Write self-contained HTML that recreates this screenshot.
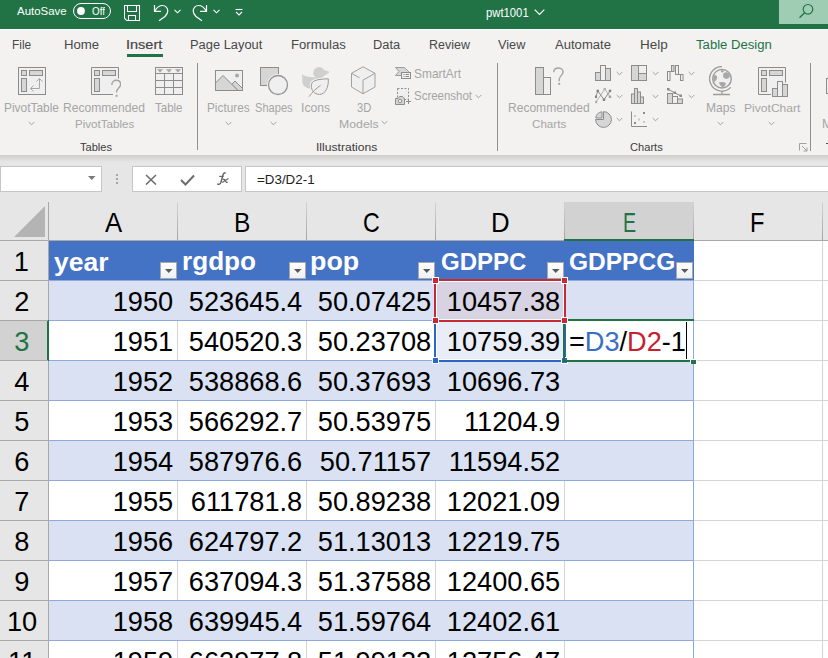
<!DOCTYPE html>
<html><head><meta charset="utf-8"><style>
html,body{margin:0;padding:0;}
body{width:828px;height:658px;overflow:hidden;position:relative;background:#fff;font-family:"Liberation Sans", sans-serif;}
div,svg{box-sizing:border-box;}
</style></head><body>
<div style="position:absolute;left:0px;top:0px;width:828px;height:29px;background:#217346;"></div><div style="position:absolute;left:16.60px;top:4px;font-size:11.83px;line-height:14px;height:14px;color:#fff;font-weight:normal;white-space:nowrap;transform:scaleX(0.9674);transform-origin:left 0;">AutoSave</div><div style="position:absolute;left:73px;top:3px;width:36px;height:14px;border:1px solid #fff;border-radius:8px;box-sizing:content-box"></div><svg style="position:absolute;left:76px;top:6px;" width="10" height="10" viewBox="0 0 10 10"><circle cx="5" cy="5" r="3.9" fill="#fff"/></svg><div style="position:absolute;left:91.81px;top:5px;font-size:10.60px;line-height:12px;height:12px;color:#fff;font-weight:normal;white-space:nowrap;transform:scaleX(0.9285);transform-origin:left 0;">Off</div><svg style="position:absolute;left:124px;top:5px;" width="17" height="17" viewBox="0 0 17 17"><path d="M0.5 0.5H15.5V15.5H2.8L0.5 13.2Z" fill="none" stroke="#fff" stroke-width="1.05"/><path d="M3.5 0.5V6.5H12.5V0.5" fill="none" stroke="#fff" stroke-width="1.05"/><path d="M4.5 15.5V10.5H11.5V15.5" fill="none" stroke="#fff" stroke-width="1.05"/></svg><svg style="position:absolute;left:153px;top:4px;" width="17" height="18" viewBox="0 0 17 18"><path d="M1.5 1V7.3H8" fill="none" stroke="#fff" stroke-width="1.2"/><path d="M1.8 7C3.5 4 6 1.5 9.5 1.5C12.5 1.5 14.8 4 14.8 7C14.8 9.5 13.5 11 12 12.5L6 16.8" fill="none" stroke="#fff" stroke-width="1.2"/></svg><svg style="position:absolute;left:174px;top:9px;" width="7" height="5" viewBox="0 0 7 5"><path d="M0.5 0.8L3.5 3.8L6.5 0.8" fill="none" stroke="#fff" stroke-width="1.1"/></svg><svg style="position:absolute;left:192px;top:4px;" width="17" height="18" viewBox="0 0 17 18"><g transform="translate(16,0) scale(-1,1)"><path d="M1.5 1V7.3H8" fill="none" stroke="#fff" stroke-width="1.2"/><path d="M1.8 7C3.5 4 6 1.5 9.5 1.5C12.5 1.5 14.8 4 14.8 7C14.8 9.5 13.5 11 12 12.5L6 16.8" fill="none" stroke="#fff" stroke-width="1.2"/></g></svg><svg style="position:absolute;left:213px;top:9px;" width="7" height="5" viewBox="0 0 7 5"><path d="M0.5 0.8L3.5 3.8L6.5 0.8" fill="none" stroke="#fff" stroke-width="1.1"/></svg><svg style="position:absolute;left:235px;top:8px;" width="8" height="8" viewBox="0 0 8 8"><path d="M0.5 1.5H7.5" stroke="#fff" stroke-width="1.1"/><path d="M1 4L4 7L7 4" fill="none" stroke="#fff" stroke-width="1.1"/></svg><div style="position:absolute;left:486.01px;top:6px;font-size:12.68px;line-height:14px;height:14px;color:#fff;font-weight:normal;white-space:nowrap;transform:scaleX(0.8902);transform-origin:left 0;">pwt1001</div><svg style="position:absolute;left:534px;top:9px;" width="12" height="7" viewBox="0 0 12 7"><path d="M0.7 0.7L5.5 5.5L10.3 0.7" fill="none" stroke="#fff" stroke-width="1.2"/></svg><div style="position:absolute;left:779px;top:0px;width:49px;height:24px;background:#9fcdb3;"></div><svg style="position:absolute;left:796px;top:2px;" width="20" height="20" viewBox="0 0 20 20"><circle cx="12" cy="7.3" r="4.8" fill="none" stroke="#217346" stroke-width="1.2"/><path d="M8.6 10.7L3.5 15.8" stroke="#217346" stroke-width="1.3"/></svg><div style="position:absolute;left:0px;top:29px;width:828px;height:126px;background:#f3f2f1;"></div><div style="position:absolute;left:0px;top:29px;width:828px;height:1px;background:#fbfbfb;"></div><div style="position:absolute;left:11.65px;top:37px;font-size:13.11px;line-height:15px;height:15px;color:#484848;font-weight:normal;white-space:nowrap;transform:scaleX(0.9062);transform-origin:left 0;">File</div><div style="position:absolute;left:63.74px;top:37px;font-size:13.11px;line-height:15px;height:15px;color:#484848;font-weight:normal;white-space:nowrap;transform:scaleX(1.0062);transform-origin:left 0;">Home</div><div style="position:absolute;left:125.90px;top:37px;font-size:13.11px;line-height:15px;height:15px;color:#484848;font-weight:normal;white-space:nowrap;transform:scaleX(1.1062);transform-origin:left 0;-webkit-text-stroke:0.2px #444;">Insert</div><div style="position:absolute;left:189.97px;top:37px;font-size:13.11px;line-height:15px;height:15px;color:#484848;font-weight:normal;white-space:nowrap;transform:scaleX(0.9822);transform-origin:left 0;">Page Layout</div><div style="position:absolute;left:290.55px;top:37px;font-size:13.11px;line-height:15px;height:15px;color:#484848;font-weight:normal;white-space:nowrap;transform:scaleX(1.0040);transform-origin:left 0;">Formulas</div><div style="position:absolute;left:373.17px;top:37px;font-size:13.11px;line-height:15px;height:15px;color:#484848;font-weight:normal;white-space:nowrap;transform:scaleX(0.9809);transform-origin:left 0;">Data</div><div style="position:absolute;left:429.00px;top:37px;font-size:13.11px;line-height:15px;height:15px;color:#484848;font-weight:normal;white-space:nowrap;transform:scaleX(0.9512);transform-origin:left 0;">Review</div><div style="position:absolute;left:497.97px;top:37px;font-size:13.11px;line-height:15px;height:15px;color:#484848;font-weight:normal;white-space:nowrap;transform:scaleX(0.9697);transform-origin:left 0;">View</div><div style="position:absolute;left:555.00px;top:37px;font-size:13.11px;line-height:15px;height:15px;color:#484848;font-weight:normal;white-space:nowrap;transform:scaleX(0.9968);transform-origin:left 0;">Automate</div><div style="position:absolute;left:640.12px;top:37px;font-size:13.11px;line-height:15px;height:15px;color:#484848;font-weight:normal;white-space:nowrap;transform:scaleX(1.0317);transform-origin:left 0;">Help</div><div style="position:absolute;left:696.04px;top:37px;font-size:13.11px;line-height:15px;height:15px;color:#217346;font-weight:normal;white-space:nowrap;">Table Design</div><div style="position:absolute;left:127px;top:54px;width:36px;height:3px;background:#217346;"></div><div style="position:absolute;left:79.98px;top:141px;font-size:10.95px;line-height:12px;height:12px;color:#3c3c3c;font-weight:normal;white-space:nowrap;transform:scaleX(1.0137);transform-origin:left 0;">Tables</div><div style="position:absolute;left:316.41px;top:141px;font-size:10.95px;line-height:12px;height:12px;color:#3c3c3c;font-weight:normal;white-space:nowrap;transform:scaleX(1.1082);transform-origin:left 0;">Illustrations</div><div style="position:absolute;left:629.84px;top:142px;font-size:10.00px;line-height:11px;height:11px;color:#3c3c3c;font-weight:normal;white-space:nowrap;transform:scaleX(1.1119);transform-origin:left 0;">Charts</div><div style="position:absolute;left:197px;top:63px;width:1px;height:87px;background:#8f8f8f;"></div><div style="position:absolute;left:497px;top:63px;width:1px;height:88px;background:#8f8f8f;"></div><div style="position:absolute;left:810px;top:63px;width:1px;height:88px;background:#8f8f8f;"></div><div style="position:absolute;left:4.45px;top:101px;font-size:12.16px;line-height:14px;height:14px;color:#a5a5a5;font-weight:normal;white-space:nowrap;transform:scaleX(0.9797);transform-origin:left 0;">PivotTable</div><svg style="position:absolute;left:27.9px;top:120.7px;" width="7" height="5" viewBox="0 0 7 5"><path d="M0.7 1L3.5 3.8L6.3 1" fill="none" stroke="#a0a0a0" stroke-width="1"/></svg><div style="position:absolute;left:63.33px;top:100px;font-size:12.97px;line-height:15px;height:15px;color:#a5a5a5;font-weight:normal;white-space:nowrap;transform:scaleX(0.9322);transform-origin:left 0;">Recommended</div><div style="position:absolute;left:74.77px;top:118px;font-size:11.49px;line-height:12px;height:12px;color:#a5a5a5;font-weight:normal;white-space:nowrap;transform:scaleX(1.0099);transform-origin:left 0;">PivotTables</div><div style="position:absolute;left:155.17px;top:101px;font-size:12.16px;line-height:14px;height:14px;color:#a5a5a5;font-weight:normal;white-space:nowrap;transform:scaleX(0.9457);transform-origin:left 0;">Table</div><svg style="position:absolute;left:18px;top:67px;" width="30" height="30" viewBox="0 0 30 30"><rect x="0.5" y="0.5" width="27" height="27" fill="#efefef" stroke="#8c8c8c"/><rect x="3.5" y="3.5" width="5" height="5" fill="#d6d6d6" stroke="#8c8c8c"/><rect x="11.5" y="3.5" width="13" height="5" fill="#d6d6d6" stroke="#8c8c8c"/><rect x="3.5" y="11.5" width="5" height="13" fill="#d6d6d6" stroke="#8c8c8c"/><path d="M12.5 21.5H21.5V11.5M18.5 14.5L21.5 11.5L24.5 14.5M15.5 18.5L12.5 21.5L15.5 24.5" fill="none" stroke="#a8a8a8"/></svg><svg style="position:absolute;left:91px;top:67px;" width="30" height="30" viewBox="0 0 30 30"><path d="M27.5 11.5V0.5H0.5V27.5H22" fill="#efefef" stroke="#8c8c8c"/><rect x="3.5" y="3.5" width="5" height="5" fill="#d6d6d6" stroke="#8c8c8c"/><rect x="11.5" y="3.5" width="13" height="5" fill="#d6d6d6" stroke="#8c8c8c"/><rect x="3.5" y="11.5" width="5" height="13" fill="#d6d6d6" stroke="#8c8c8c"/><path d="M20.8 18C20.8 15 23 13.3 25.3 13.3C27.8 13.3 29.6 15 29.6 17.6C29.6 20.5 25.8 21.5 25.6 24.5V25.6" fill="none" stroke="#a4a4a4" stroke-width="1.4"/><rect x="24.6" y="27.8" width="2" height="2" fill="#a4a4a4"/></svg><svg style="position:absolute;left:155px;top:67px;" width="28" height="28" viewBox="0 0 28 28"><rect x="0.5" y="0.5" width="27" height="27" fill="#efefef" stroke="#8c8c8c"/><path d="M0.5 6.5H27.5M0.5 13.5H27.5M0.5 20.5H27.5M9.5 6.5V27.5M18.5 6.5V27.5" stroke="#8c8c8c"/><path d="M2 2.2H8L5 5.4Z M11 2.2H17L14 5.4Z M20 2.2H26L23 5.4Z" fill="#a4a4a4"/></svg><div style="position:absolute;left:207.36px;top:101px;font-size:12.16px;line-height:14px;height:14px;color:#a5a5a5;font-weight:normal;white-space:nowrap;transform:scaleX(0.9702);transform-origin:left 0;">Pictures</div><svg style="position:absolute;left:225.2px;top:120.7px;" width="7" height="5" viewBox="0 0 7 5"><path d="M0.7 1L3.5 3.8L6.3 1" fill="none" stroke="#a0a0a0" stroke-width="1"/></svg><div style="position:absolute;left:254.55px;top:101px;font-size:12.16px;line-height:14px;height:14px;color:#a5a5a5;font-weight:normal;white-space:nowrap;transform:scaleX(0.9116);transform-origin:left 0;">Shapes</div><svg style="position:absolute;left:270.0px;top:120.7px;" width="7" height="5" viewBox="0 0 7 5"><path d="M0.7 1L3.5 3.8L6.3 1" fill="none" stroke="#a0a0a0" stroke-width="1"/></svg><div style="position:absolute;left:301.40px;top:101px;font-size:12.14px;line-height:14px;height:14px;color:#a5a5a5;font-weight:normal;white-space:nowrap;transform:scaleX(1.0021);transform-origin:left 0;">Icons</div><div style="position:absolute;left:356.75px;top:101px;font-size:11.97px;line-height:14px;height:14px;color:#a5a5a5;font-weight:normal;white-space:nowrap;transform:scaleX(0.9336);transform-origin:left 0;">3D</div><div style="position:absolute;left:338.92px;top:118px;font-size:11.49px;line-height:12px;height:12px;color:#a5a5a5;font-weight:normal;white-space:nowrap;transform:scaleX(1.0693);transform-origin:left 0;">Models</div><svg style="position:absolute;left:381.0px;top:120.0px;" width="7" height="5" viewBox="0 0 7 5"><path d="M0.7 1L3.5 3.8L6.3 1" fill="none" stroke="#a0a0a0" stroke-width="1"/></svg><svg style="position:absolute;left:215px;top:70px;" width="28" height="21" viewBox="0 0 28 21"><rect x="0.5" y="0.5" width="27" height="20" fill="#efefef" stroke="#8c8c8c"/><path d="M16.8 14.3L20 11L27.5 18.5V20.5H23Z" fill="#d6d6d6" stroke="#8c8c8c"/><path d="M0.5 13L8 5.5L23 20.5H0.5Z" fill="#d6d6d6" stroke="#8c8c8c"/><path d="M0.5 20.5H27.5" stroke="#8c8c8c"/><circle cx="22" cy="5.5" r="2" fill="#a8a8a8"/></svg><svg style="position:absolute;left:260px;top:67px;" width="30" height="30" viewBox="0 0 30 30"><rect x="0.5" y="0.5" width="18" height="18" fill="#d6d6d6" stroke="#8c8c8c"/><circle cx="18" cy="18" r="11" fill="#f3f2f1"/><circle cx="18" cy="18" r="9.5" fill="#efefef" stroke="#959595" stroke-width="1.3"/></svg><svg style="position:absolute;left:302px;top:67px;" width="30" height="31" viewBox="0 0 30 31"><g fill="#cfcfcf"><circle cx="17" cy="5.9" r="5.8"/><path d="M21.5 3L27.8 5.1L21.8 9.2Z"/><path d="M0.3 7.1C2 9.5 6 10.3 12.8 10.3L17 11L14 21L7.8 21.6C3.5 21 0.3 18.5 0.3 14Z"/></g><path d="M9.3 19C9.3 14 13 12.3 26.3 11.8C26.8 20 23.5 27.4 17.4 27.4C12.5 27.4 9.3 23.5 9.3 19Z" fill="#efefef" stroke="#f3f2f1" stroke-width="3"/><path d="M9.3 19C9.3 14 13 12.3 26.3 11.8C26.8 20 23.5 27.4 17.4 27.4C12.5 27.4 9.3 23.5 9.3 19Z" fill="#efefef" stroke="#9a9a9a" stroke-width="1"/><path d="M7 29.7C10 25.5 14 21.5 18.5 18.4" fill="none" stroke="#9a9a9a" stroke-width="1"/></svg><svg style="position:absolute;left:351px;top:66px;" width="25" height="29" viewBox="0 0 25 29"><path d="M12 0.8L24 7.3V21L12 27.8L0.5 21V7.3Z" fill="#efefef" stroke="#a0a0a0"/><path d="M12 14.2V27.8M12 14.2L24 7.3M0.5 7.3L8.5 11.8" fill="none" stroke="#a0a0a0"/></svg><div style="position:absolute;left:413.80px;top:67px;font-size:12.25px;line-height:14px;height:14px;color:#a5a5a5;font-weight:normal;white-space:nowrap;transform:scaleX(0.9734);transform-origin:left 0;">SmartArt</div><div style="position:absolute;left:413.83px;top:89px;font-size:12.16px;line-height:14px;height:14px;color:#a5a5a5;font-weight:normal;white-space:nowrap;transform:scaleX(0.9439);transform-origin:left 0;">Screenshot</div><svg style="position:absolute;left:475.0px;top:93.9px;" width="7" height="5" viewBox="0 0 7 5"><path d="M0.7 1L3.5 3.8L6.3 1" fill="none" stroke="#a0a0a0" stroke-width="1"/></svg><svg style="position:absolute;left:395px;top:67px;" width="17" height="13" viewBox="0 0 17 13"><path d="M0.5 0.5H9.5L14.5 5.5H6.5V8.5H0.5L4 4.5Z" fill="#d6d6d6" stroke="#8c8c8c" stroke-width="0.8"/><rect x="6.5" y="5.5" width="9" height="6" fill="#efefef" stroke="#8c8c8c"/><path d="M8.5 7.5H9.5M10.5 7.5H14M8.5 9.5H9.5M10.5 9.5H14" stroke="#8c8c8c"/></svg><svg style="position:absolute;left:395px;top:88px;" width="17" height="17" viewBox="0 0 17 17"><rect x="2.5" y="0.5" width="11" height="11" fill="#efefef" stroke="#8c8c8c" stroke-dasharray="2 1.5"/><path d="M0.5 10.5H3L4.5 8.5H7.5L9 10.5H9.5V16.5H0.5Z" fill="#d6d6d6" stroke="#8c8c8c"/><circle cx="5" cy="13" r="1.8" fill="#efefef" stroke="#8c8c8c"/><path d="M13.5 11V16M11 13.5H16" stroke="#8c8c8c"/></svg><div style="position:absolute;left:507.54px;top:101px;font-size:12.30px;line-height:14px;height:14px;color:#a5a5a5;font-weight:normal;white-space:nowrap;transform:scaleX(0.9797);transform-origin:left 0;">Recommended</div><div style="position:absolute;left:532.02px;top:118px;font-size:11.22px;line-height:12px;height:12px;color:#a5a5a5;font-weight:normal;white-space:nowrap;transform:scaleX(1.0350);transform-origin:left 0;">Charts</div><svg style="position:absolute;left:535px;top:67px;" width="30" height="30" viewBox="0 0 30 30"><rect x="0.5" y="0.5" width="8" height="27" fill="#d6d6d6" stroke="#8c8c8c"/><rect x="8.5" y="10.5" width="7" height="17" fill="#efefef" stroke="#8c8c8c"/><path d="M18.8 5.2C18.8 2.5 20.8 1 23.3 1C25.8 1 28 2.5 28 5C28 8.3 24.2 9 24.2 12.5V14.3" fill="none" stroke="#a4a4a4" stroke-width="1.4"/><rect x="23.2" y="15.8" width="2" height="2" fill="#a4a4a4"/></svg><svg style="position:absolute;left:595px;top:65px;" width="17" height="17" viewBox="0 0 17 17"><rect x="0.5" y="7.5" width="5" height="8" fill="#d6d6d6" stroke="#8c8c8c"/><rect x="5.5" y="0.5" width="5" height="15" fill="#efefef" stroke="#8c8c8c"/><rect x="10.5" y="3.5" width="5" height="12" fill="#d6d6d6" stroke="#8c8c8c"/></svg><svg style="position:absolute;left:615.5px;top:71.0px;" width="7" height="5" viewBox="0 0 7 5"><path d="M0.7 1L3.5 3.8L6.3 1" fill="none" stroke="#a0a0a0" stroke-width="1"/></svg><svg style="position:absolute;left:631px;top:65px;" width="17" height="17" viewBox="0 0 17 17"><rect x="0.5" y="0.5" width="15" height="15" fill="#d6d6d6" stroke="#8c8c8c"/><rect x="7.5" y="0.5" width="8" height="8" fill="#efefef" stroke="#8c8c8c"/><path d="M7.5 0.5V15.5" stroke="#8c8c8c"/></svg><svg style="position:absolute;left:651.5px;top:71.0px;" width="7" height="5" viewBox="0 0 7 5"><path d="M0.7 1L3.5 3.8L6.3 1" fill="none" stroke="#a0a0a0" stroke-width="1"/></svg><svg style="position:absolute;left:667px;top:65px;" width="17" height="17" viewBox="0 0 17 17"><rect x="0.5" y="6.5" width="2.5" height="9" fill="#efefef" stroke="#8c8c8c"/><rect x="4.5" y="0.5" width="2.5" height="6" fill="#d6d6d6" stroke="#8c8c8c"/><rect x="8.5" y="0.5" width="3" height="9" fill="#efefef" stroke="#8c8c8c"/><path d="M3 6.5H4.5" stroke="#8c8c8c"/><rect x="13.5" y="9.5" width="2.5" height="6" fill="#efefef" stroke="#8c8c8c"/><path d="M11.5 9.5H13.5" stroke="#8c8c8c"/></svg><svg style="position:absolute;left:687.5px;top:71.0px;" width="7" height="5" viewBox="0 0 7 5"><path d="M0.7 1L3.5 3.8L6.3 1" fill="none" stroke="#a0a0a0" stroke-width="1"/></svg><svg style="position:absolute;left:595px;top:88px;" width="17" height="17" viewBox="0 0 17 17"><path d="M1 14L9.8 1L15 8.8" fill="none" stroke="#b0b0b0" stroke-width="1"/><path d="M0.8 8.8L2.8 2.9L9 11.7L15 2.9" fill="none" stroke="#8c8c8c" stroke-width="1"/><rect x="-0.3999999999999999" y="7.6000000000000005" width="2.4" height="2.4" fill="#808080"/><rect x="1.5999999999999999" y="1.7" width="2.4" height="2.4" fill="#808080"/><rect x="7.8" y="10.5" width="2.4" height="2.4" fill="#808080"/><rect x="13.8" y="1.7" width="2.4" height="2.4" fill="#808080"/><rect x="-0.19999999999999996" y="12.8" width="2.4" height="2.4" fill="#b0b0b0"/><rect x="8.600000000000001" y="-0.19999999999999996" width="2.4" height="2.4" fill="#b0b0b0"/><rect x="13.8" y="7.6000000000000005" width="2.4" height="2.4" fill="#a0a0a0"/></svg><svg style="position:absolute;left:615.5px;top:94.0px;" width="7" height="5" viewBox="0 0 7 5"><path d="M0.7 1L3.5 3.8L6.3 1" fill="none" stroke="#a0a0a0" stroke-width="1"/></svg><svg style="position:absolute;left:631px;top:88px;" width="17" height="17" viewBox="0 0 17 17"><rect x="0.5" y="6" width="3" height="9.5" fill="#d6d6d6" stroke="#8c8c8c"/><rect x="3.5" y="0.5" width="3" height="15" fill="#d6d6d6" stroke="#8c8c8c"/><rect x="6.5" y="4" width="3" height="11.5" fill="#d6d6d6" stroke="#8c8c8c"/><rect x="9.5" y="9" width="3" height="6.5" fill="#d6d6d6" stroke="#8c8c8c"/></svg><svg style="position:absolute;left:651.5px;top:94.0px;" width="7" height="5" viewBox="0 0 7 5"><path d="M0.7 1L3.5 3.8L6.3 1" fill="none" stroke="#a0a0a0" stroke-width="1"/></svg><svg style="position:absolute;left:667px;top:88px;" width="17" height="17" viewBox="0 0 17 17"><rect x="0.5" y="5.5" width="5" height="10" fill="#d6d6d6" stroke="#8c8c8c"/><rect x="5.5" y="8.5" width="5" height="7" fill="#efefef" stroke="#8c8c8c"/><rect x="10.5" y="11" width="5" height="4.5" fill="#d6d6d6" stroke="#8c8c8c"/><path d="M1.5 1.5L8 5L14 8" stroke="#8c8c8c"/><rect x="0" y="0" width="2.5" height="2.5" fill="#8c8c8c"/><rect x="6.5" y="3.5" width="2.5" height="2.5" fill="#8c8c8c"/><rect x="12.5" y="6.5" width="2.5" height="2.5" fill="#8c8c8c"/></svg><svg style="position:absolute;left:687.5px;top:94.0px;" width="7" height="5" viewBox="0 0 7 5"><path d="M0.7 1L3.5 3.8L6.3 1" fill="none" stroke="#a0a0a0" stroke-width="1"/></svg><svg style="position:absolute;left:595px;top:111px;" width="17" height="17" viewBox="0 0 17 17"><path d="M8.5 8.5V0.6A7.9 7.9 0 1 1 0.6 8.5Z" fill="#d6d6d6" stroke="#8c8c8c"/><path d="M7 7V0.8A6.5 6.5 0 0 0 0.8 7Z" fill="#d6d6d6" stroke="#8c8c8c"/></svg><svg style="position:absolute;left:615.5px;top:117.0px;" width="7" height="5" viewBox="0 0 7 5"><path d="M0.7 1L3.5 3.8L6.3 1" fill="none" stroke="#a0a0a0" stroke-width="1"/></svg><svg style="position:absolute;left:631px;top:111px;" width="17" height="17" viewBox="0 0 17 17"><path d="M0.5 0.5V15.5H16" fill="none" stroke="#8c8c8c"/><rect x="12" y="1" width="2" height="2" fill="#8c8c8c"/><rect x="3" y="11" width="2" height="2" fill="#8c8c8c"/><rect x="3" y="4" width="2" height="2" fill="#c8c8c8"/><rect x="7" y="7.5" width="2" height="2" fill="#c8c8c8"/><rect x="12" y="10" width="2" height="2" fill="#c8c8c8"/></svg><svg style="position:absolute;left:651.5px;top:117.0px;" width="7" height="5" viewBox="0 0 7 5"><path d="M0.7 1L3.5 3.8L6.3 1" fill="none" stroke="#a0a0a0" stroke-width="1"/></svg><div style="position:absolute;left:705.63px;top:101px;font-size:12.43px;line-height:14px;height:14px;color:#a5a5a5;font-weight:normal;white-space:nowrap;transform:scaleX(0.9738);transform-origin:left 0;">Maps</div><svg style="position:absolute;left:717.0px;top:120.5px;" width="7" height="5" viewBox="0 0 7 5"><path d="M0.7 1L3.5 3.8L6.3 1" fill="none" stroke="#a0a0a0" stroke-width="1"/></svg><svg style="position:absolute;left:709px;top:66px;" width="24" height="30" viewBox="0 0 24 30"><circle cx="13" cy="12.7" r="9.3" fill="#efefef" stroke="#9c9c9c" stroke-width="1.4"/><ellipse cx="17.4" cy="9.6" rx="3.3" ry="3.3" fill="#a8a8a8"/><path d="M9.8 16.5C11.5 15.5 15.5 15.8 17 17.3C16.5 19.5 15 21.2 13.5 21.5C12 20.5 10.5 18.5 9.8 16.5Z" fill="#a8a8a8"/><path d="M5.2 9.5C6.5 8.5 8 9.5 8.2 11.5C8 13.5 6.5 15.5 5.2 16C4 14 4 11 5.2 9.5Z" fill="#a8a8a8"/><circle cx="13.3" cy="5.3" r="1.3" fill="#a8a8a8"/><path d="M13 0.5A12.3 12.3 0 1 0 21.7 21.4" fill="none" stroke="#9c9c9c" stroke-width="1.3"/><path d="M13 25V28.5M4 28.5H21" stroke="#9c9c9c" stroke-width="1.3"/></svg><div style="position:absolute;left:743.53px;top:101px;font-size:11.76px;line-height:13px;height:13px;color:#a5a5a5;font-weight:normal;white-space:nowrap;transform:scaleX(1.0289);transform-origin:left 0;">PivotChart</div><svg style="position:absolute;left:768.0px;top:120.5px;" width="7" height="5" viewBox="0 0 7 5"><path d="M0.7 1L3.5 3.8L6.3 1" fill="none" stroke="#a0a0a0" stroke-width="1"/></svg><svg style="position:absolute;left:758px;top:67px;" width="30" height="30" viewBox="0 0 30 30"><path d="M13 27.5H0.5V0.5H27.5V15.5" fill="#efefef" stroke="#8c8c8c" stroke-linejoin="miter"/><rect x="3.5" y="3.5" width="5" height="5" fill="#d6d6d6" stroke="#8c8c8c"/><rect x="11.5" y="3.5" width="13" height="5" fill="#d6d6d6" stroke="#8c8c8c"/><rect x="3.5" y="11.5" width="5" height="13" fill="#d6d6d6" stroke="#8c8c8c"/><rect x="14.5" y="21.5" width="5" height="8" fill="#d6d6d6" stroke="#8c8c8c"/><rect x="19.5" y="14.5" width="5" height="15" fill="#efefef" stroke="#8c8c8c"/><rect x="24.5" y="17.5" width="5" height="12" fill="#d6d6d6" stroke="#8c8c8c"/></svg><svg style="position:absolute;left:799px;top:143px;" width="9" height="9" viewBox="0 0 9 9"><path d="M0.5 7.5V0.5H7.5" fill="none" stroke="#a0a0a0"/><path d="M3 3L8 8M8 4.5V8H4.5" fill="none" stroke="#a0a0a0"/></svg><svg style="position:absolute;left:826px;top:78px;" width="12" height="17" viewBox="0 0 12 17"><rect x="0.5" y="0.5" width="10" height="15" fill="#efefef" stroke="#8c8c8c"/></svg><div style="position:absolute;left:822.00px;top:117px;font-size:12.50px;line-height:14px;height:14px;color:#a5a5a5;font-weight:normal;white-space:nowrap;">M</div><div style="position:absolute;left:826px;top:143px;width:2px;height:1px;background:#555;"></div><div style="position:absolute;left:0px;top:155px;width:828px;height:47px;background:#e6e6e6;"></div><div style="position:absolute;left:0;top:155px;width:828px;height:7px;background:linear-gradient(#cdcdcd,#e6e6e6)"></div><div style="position:absolute;left:0px;top:166px;width:102px;height:26px;background:#fff;border:1px solid #c6c6c6"></div><svg style="position:absolute;left:88px;top:176px;" width="8" height="5" viewBox="0 0 8 5"><path d="M0 0H7.5L3.75 4Z" fill="#7a7a7a"/></svg><div style="position:absolute;left:116px;top:174px;width:2px;height:2px;background:#a6a6a6;"></div><div style="position:absolute;left:116px;top:178px;width:2px;height:2px;background:#a6a6a6;"></div><div style="position:absolute;left:116px;top:182px;width:2px;height:2px;background:#a6a6a6;"></div><div style="position:absolute;left:132px;top:166px;width:110px;height:26px;background:#fff;border:1px solid #c6c6c6"></div><svg style="position:absolute;left:145px;top:174px;" width="12" height="11" viewBox="0 0 12 11"><path d="M1 1L11 10.5M11 1L1 10.5" stroke="#6e6e6e" stroke-width="1.6"/></svg><svg style="position:absolute;left:180px;top:174px;" width="15" height="12" viewBox="0 0 15 12"><path d="M1 6L5.5 10.5L14 1.5" fill="none" stroke="#6e6e6e" stroke-width="2"/></svg><svg style="position:absolute;left:215px;top:171px;" width="16" height="16" viewBox="0 0 16 16"><path d="M10.8 2.2C10 1.6 8.6 1.8 8.1 3.6L5.8 11.6C5.3 13.3 3.8 13.6 2.3 12.8" fill="none" stroke="#666" stroke-width="1.5"/><path d="M4.2 5.4H8.6" stroke="#666" stroke-width="1.2"/><path d="M7.6 8.2C9 8 10 8.8 10.6 10.2C11 11.2 11.8 11.6 12.8 11.4M13.4 7.6L7.2 11.6" fill="none" stroke="#666" stroke-width="1.2"/></svg><div style="position:absolute;left:245px;top:166px;width:600px;height:26px;background:#fff;border:1px solid #c6c6c6"></div><div style="position:absolute;left:256.53px;top:172px;font-size:12.90px;line-height:15px;height:15px;color:#222;font-weight:normal;white-space:nowrap;transform:scaleX(1.0368);transform-origin:left 0;">=D3/D2-1</div><div style="position:absolute;left:0px;top:202px;width:828px;height:456px;background:#fff;"></div><div style="position:absolute;left:0px;top:202px;width:828px;height:38px;background:#e6e6e6;"></div><div style="position:absolute;left:564px;top:202px;width:130px;height:38px;background:#d2d2d2;"></div><div style="position:absolute;left:0px;top:240px;width:828px;height:1px;background:#a8a8a8;"></div><div style="position:absolute;left:48px;top:202px;width:1px;height:39px;background:#a8a8a8;"></div><svg style="position:absolute;left:0px;top:202px;" width="48" height="38" viewBox="0 0 48 38"><path d="M14 35L45 35L45 4Z" fill="#b4b4b4"/></svg><div style="position:absolute;left:177px;top:202px;width:1px;height:38px;background:linear-gradient(#d4d4d4,#a4a4a4)"></div><div style="position:absolute;left:306px;top:202px;width:1px;height:38px;background:linear-gradient(#d4d4d4,#a4a4a4)"></div><div style="position:absolute;left:435px;top:202px;width:1px;height:38px;background:linear-gradient(#d4d4d4,#a4a4a4)"></div><div style="position:absolute;left:564px;top:202px;width:1px;height:38px;background:linear-gradient(#d4d4d4,#a4a4a4)"></div><div style="position:absolute;left:693px;top:202px;width:1px;height:38px;background:linear-gradient(#d4d4d4,#a4a4a4)"></div><div style="position:absolute;left:822px;top:202px;width:1px;height:38px;background:linear-gradient(#d4d4d4,#a4a4a4)"></div><div style="position:absolute;left:564px;top:239px;width:130px;height:2px;background:#217346;"></div><div style="position:absolute;left:105.10px;top:208px;font-size:26.96px;line-height:30px;height:30px;color:#000;font-weight:normal;white-space:nowrap;transform:scaleX(0.9555);transform-origin:left 0;">A</div><div style="position:absolute;left:234.24px;top:208px;font-size:26.96px;line-height:30px;height:30px;color:#000;font-weight:normal;white-space:nowrap;transform:scaleX(0.9099);transform-origin:left 0;">B</div><div style="position:absolute;left:362.94px;top:207px;font-size:27.83px;line-height:31px;height:31px;color:#000;font-weight:normal;white-space:nowrap;transform:scaleX(0.8328);transform-origin:left 0;">C</div><div style="position:absolute;left:491.24px;top:208px;font-size:26.96px;line-height:30px;height:30px;color:#000;font-weight:normal;white-space:nowrap;transform:scaleX(0.9557);transform-origin:left 0;">D</div><div style="position:absolute;left:622.83px;top:207px;font-size:27.68px;line-height:31px;height:31px;color:#217346;font-weight:normal;white-space:nowrap;transform:scaleX(0.7091);transform-origin:left 0;">E</div><div style="position:absolute;left:750.41px;top:207px;font-size:27.83px;line-height:31px;height:31px;color:#000;font-weight:normal;white-space:nowrap;transform:scaleX(0.8508);transform-origin:left 0;">F</div><div style="position:absolute;left:0px;top:241px;width:48px;height:417px;background:#e6e6e6;"></div><div style="position:absolute;left:48px;top:241px;width:1px;height:417px;background:#a8a8a8;"></div><div style="position:absolute;left:0px;top:321px;width:47px;height:39px;background:#d2d2d2;"></div><div style="position:absolute;left:47px;top:320px;width:2px;height:41px;background:#217346;"></div><div style="position:absolute;left:13.73px;top:246px;font-size:27.20px;line-height:31px;height:31px;color:#000;font-weight:normal;white-space:nowrap;">1</div><div style="position:absolute;left:0px;top:280px;width:48px;height:1px;background:#a8a8a8;"></div><div style="position:absolute;left:14.13px;top:286px;font-size:27.20px;line-height:31px;height:31px;color:#000;font-weight:normal;white-space:nowrap;">2</div><div style="position:absolute;left:0px;top:320px;width:48px;height:1px;background:#a8a8a8;"></div><div style="position:absolute;left:14.27px;top:326px;font-size:27.20px;line-height:31px;height:31px;color:#217346;font-weight:normal;white-space:nowrap;">3</div><div style="position:absolute;left:0px;top:360px;width:48px;height:1px;background:#a8a8a8;"></div><div style="position:absolute;left:14.27px;top:366px;font-size:27.20px;line-height:31px;height:31px;color:#000;font-weight:normal;white-space:nowrap;">4</div><div style="position:absolute;left:0px;top:400px;width:48px;height:1px;background:#a8a8a8;"></div><div style="position:absolute;left:14.27px;top:406px;font-size:27.20px;line-height:31px;height:31px;color:#000;font-weight:normal;white-space:nowrap;">5</div><div style="position:absolute;left:0px;top:440px;width:48px;height:1px;background:#a8a8a8;"></div><div style="position:absolute;left:14.13px;top:446px;font-size:27.20px;line-height:31px;height:31px;color:#000;font-weight:normal;white-space:nowrap;">6</div><div style="position:absolute;left:0px;top:480px;width:48px;height:1px;background:#a8a8a8;"></div><div style="position:absolute;left:14.13px;top:486px;font-size:27.20px;line-height:31px;height:31px;color:#000;font-weight:normal;white-space:nowrap;">7</div><div style="position:absolute;left:0px;top:520px;width:48px;height:1px;background:#a8a8a8;"></div><div style="position:absolute;left:14.27px;top:526px;font-size:27.20px;line-height:31px;height:31px;color:#000;font-weight:normal;white-space:nowrap;">8</div><div style="position:absolute;left:0px;top:560px;width:48px;height:1px;background:#a8a8a8;"></div><div style="position:absolute;left:14.13px;top:566px;font-size:27.20px;line-height:31px;height:31px;color:#000;font-weight:normal;white-space:nowrap;">9</div><div style="position:absolute;left:0px;top:600px;width:48px;height:1px;background:#a8a8a8;"></div><div style="position:absolute;left:6.96px;top:606px;font-size:27.20px;line-height:31px;height:31px;color:#000;font-weight:normal;white-space:nowrap;">10</div><div style="position:absolute;left:0px;top:640px;width:48px;height:1px;background:#a8a8a8;"></div><div style="position:absolute;left:8.05px;top:646px;font-size:27.20px;line-height:31px;height:31px;color:#000;font-weight:normal;white-space:nowrap;">11</div><div style="position:absolute;left:0px;top:680px;width:48px;height:1px;background:#a8a8a8;"></div><div style="position:absolute;left:49px;top:241px;width:645px;height:40px;background:#4472c4;"></div><div style="position:absolute;left:694px;top:280px;width:134px;height:1px;background:#d4d4d4;"></div><div style="position:absolute;left:49px;top:281px;width:644px;height:40px;background:#d9e1f2;"></div><div style="position:absolute;left:694px;top:320px;width:134px;height:1px;background:#d4d4d4;"></div><div style="position:absolute;left:694px;top:360px;width:134px;height:1px;background:#d4d4d4;"></div><div style="position:absolute;left:49px;top:361px;width:644px;height:40px;background:#d9e1f2;"></div><div style="position:absolute;left:694px;top:400px;width:134px;height:1px;background:#d4d4d4;"></div><div style="position:absolute;left:694px;top:440px;width:134px;height:1px;background:#d4d4d4;"></div><div style="position:absolute;left:49px;top:441px;width:644px;height:40px;background:#d9e1f2;"></div><div style="position:absolute;left:694px;top:480px;width:134px;height:1px;background:#d4d4d4;"></div><div style="position:absolute;left:694px;top:520px;width:134px;height:1px;background:#d4d4d4;"></div><div style="position:absolute;left:49px;top:521px;width:644px;height:40px;background:#d9e1f2;"></div><div style="position:absolute;left:694px;top:560px;width:134px;height:1px;background:#d4d4d4;"></div><div style="position:absolute;left:694px;top:600px;width:134px;height:1px;background:#d4d4d4;"></div><div style="position:absolute;left:49px;top:601px;width:644px;height:40px;background:#d9e1f2;"></div><div style="position:absolute;left:694px;top:640px;width:134px;height:1px;background:#d4d4d4;"></div><div style="position:absolute;left:694px;top:680px;width:134px;height:1px;background:#d4d4d4;"></div><div style="position:absolute;left:822px;top:241px;width:1px;height:417px;background:#d4d4d4;"></div><div style="position:absolute;left:49px;top:280px;width:645px;height:1px;background:#8ea9db;"></div><div style="position:absolute;left:49px;top:320px;width:645px;height:1px;background:#8ea9db;"></div><div style="position:absolute;left:177px;top:321px;width:1px;height:39px;background:#d4d4d4;"></div><div style="position:absolute;left:306px;top:321px;width:1px;height:39px;background:#d4d4d4;"></div><div style="position:absolute;left:435px;top:321px;width:1px;height:39px;background:#d4d4d4;"></div><div style="position:absolute;left:564px;top:321px;width:1px;height:39px;background:#d4d4d4;"></div><div style="position:absolute;left:49px;top:360px;width:645px;height:1px;background:#8ea9db;"></div><div style="position:absolute;left:49px;top:400px;width:645px;height:1px;background:#8ea9db;"></div><div style="position:absolute;left:177px;top:401px;width:1px;height:39px;background:#d4d4d4;"></div><div style="position:absolute;left:306px;top:401px;width:1px;height:39px;background:#d4d4d4;"></div><div style="position:absolute;left:435px;top:401px;width:1px;height:39px;background:#d4d4d4;"></div><div style="position:absolute;left:564px;top:401px;width:1px;height:39px;background:#d4d4d4;"></div><div style="position:absolute;left:49px;top:440px;width:645px;height:1px;background:#8ea9db;"></div><div style="position:absolute;left:49px;top:480px;width:645px;height:1px;background:#8ea9db;"></div><div style="position:absolute;left:177px;top:481px;width:1px;height:39px;background:#d4d4d4;"></div><div style="position:absolute;left:306px;top:481px;width:1px;height:39px;background:#d4d4d4;"></div><div style="position:absolute;left:435px;top:481px;width:1px;height:39px;background:#d4d4d4;"></div><div style="position:absolute;left:564px;top:481px;width:1px;height:39px;background:#d4d4d4;"></div><div style="position:absolute;left:49px;top:520px;width:645px;height:1px;background:#8ea9db;"></div><div style="position:absolute;left:49px;top:560px;width:645px;height:1px;background:#8ea9db;"></div><div style="position:absolute;left:177px;top:561px;width:1px;height:39px;background:#d4d4d4;"></div><div style="position:absolute;left:306px;top:561px;width:1px;height:39px;background:#d4d4d4;"></div><div style="position:absolute;left:435px;top:561px;width:1px;height:39px;background:#d4d4d4;"></div><div style="position:absolute;left:564px;top:561px;width:1px;height:39px;background:#d4d4d4;"></div><div style="position:absolute;left:49px;top:600px;width:645px;height:1px;background:#8ea9db;"></div><div style="position:absolute;left:49px;top:640px;width:645px;height:1px;background:#8ea9db;"></div><div style="position:absolute;left:177px;top:641px;width:1px;height:39px;background:#d4d4d4;"></div><div style="position:absolute;left:306px;top:641px;width:1px;height:39px;background:#d4d4d4;"></div><div style="position:absolute;left:435px;top:641px;width:1px;height:39px;background:#d4d4d4;"></div><div style="position:absolute;left:564px;top:641px;width:1px;height:39px;background:#d4d4d4;"></div><div style="position:absolute;left:693px;top:281px;width:1px;height:377px;background:#8ea9db;"></div><div style="position:absolute;left:436px;top:281px;width:128px;height:39px;background:#d8d3e3;"></div><div style="position:absolute;left:436px;top:321px;width:128px;height:39px;background:#e9edf7;"></div><div style="position:absolute;left:53.64px;top:247px;font-size:26.00px;line-height:30px;height:30px;color:#fff;font-weight:bold;white-space:nowrap;transform:scaleX(1.0174);transform-origin:left 0;">year</div><div style="position:absolute;left:181.67px;top:246px;font-size:26.38px;line-height:30px;height:30px;color:#fff;font-weight:bold;white-space:nowrap;transform:scaleX(0.9908);transform-origin:left 0;">rgdpo</div><div style="position:absolute;left:310.42px;top:246px;font-size:26.13px;line-height:30px;height:30px;color:#fff;font-weight:bold;white-space:nowrap;transform:scaleX(1.0278);transform-origin:left 0;">pop</div><div style="position:absolute;left:441.44px;top:248px;font-size:24.23px;line-height:27px;height:27px;color:#fff;font-weight:bold;white-space:nowrap;transform:scaleX(0.9912);transform-origin:left 0;">GDPPC</div><div style="position:absolute;left:569.22px;top:248px;font-size:24.23px;line-height:27px;height:27px;color:#fff;font-weight:bold;white-space:nowrap;transform:scaleX(1.0120);transform-origin:left 0;">GDPPCG</div><div style="position:absolute;left:160px;top:262px;width:17px;height:17px;border:1px solid #a8a8a8;background:linear-gradient(#ffffff,#eef0f3)"></div><svg style="position:absolute;left:165px;top:269px;" width="8" height="5" viewBox="0 0 8 5"><path d="M0 0H7.5L3.75 4Z" fill="#595959"/></svg><div style="position:absolute;left:289px;top:262px;width:17px;height:17px;border:1px solid #a8a8a8;background:linear-gradient(#ffffff,#eef0f3)"></div><svg style="position:absolute;left:294px;top:269px;" width="8" height="5" viewBox="0 0 8 5"><path d="M0 0H7.5L3.75 4Z" fill="#595959"/></svg><div style="position:absolute;left:418px;top:262px;width:17px;height:17px;border:1px solid #a8a8a8;background:linear-gradient(#ffffff,#eef0f3)"></div><svg style="position:absolute;left:423px;top:269px;" width="8" height="5" viewBox="0 0 8 5"><path d="M0 0H7.5L3.75 4Z" fill="#595959"/></svg><div style="position:absolute;left:547px;top:262px;width:17px;height:17px;border:1px solid #a8a8a8;background:linear-gradient(#ffffff,#eef0f3)"></div><svg style="position:absolute;left:552px;top:269px;" width="8" height="5" viewBox="0 0 8 5"><path d="M0 0H7.5L3.75 4Z" fill="#595959"/></svg><div style="position:absolute;left:676px;top:262px;width:17px;height:17px;border:1px solid #a8a8a8;background:linear-gradient(#ffffff,#eef0f3)"></div><svg style="position:absolute;left:681px;top:269px;" width="8" height="5" viewBox="0 0 8 5"><path d="M0 0H7.5L3.75 4Z" fill="#595959"/></svg><div style="position:absolute;right:654.80px;top:286px;font-size:27.20px;line-height:31px;height:31px;color:#000;font-weight:normal;white-space:nowrap;">1950</div><div style="position:absolute;right:525.80px;top:286px;font-size:27.20px;line-height:31px;height:31px;color:#000;font-weight:normal;white-space:nowrap;">523645.4</div><div style="position:absolute;right:396.80px;top:286px;font-size:27.20px;line-height:31px;height:31px;color:#000;font-weight:normal;white-space:nowrap;">50.07425</div><div style="position:absolute;right:267.80px;top:286px;font-size:27.20px;line-height:31px;height:31px;color:#000;font-weight:normal;white-space:nowrap;">10457.38</div><div style="position:absolute;right:654.80px;top:326px;font-size:27.20px;line-height:31px;height:31px;color:#000;font-weight:normal;white-space:nowrap;">1951</div><div style="position:absolute;right:525.80px;top:326px;font-size:27.20px;line-height:31px;height:31px;color:#000;font-weight:normal;white-space:nowrap;">540520.3</div><div style="position:absolute;right:396.80px;top:326px;font-size:27.20px;line-height:31px;height:31px;color:#000;font-weight:normal;white-space:nowrap;">50.23708</div><div style="position:absolute;right:267.80px;top:326px;font-size:27.20px;line-height:31px;height:31px;color:#000;font-weight:normal;white-space:nowrap;">10759.39</div><div style="position:absolute;right:654.80px;top:366px;font-size:27.20px;line-height:31px;height:31px;color:#000;font-weight:normal;white-space:nowrap;">1952</div><div style="position:absolute;right:525.80px;top:366px;font-size:27.20px;line-height:31px;height:31px;color:#000;font-weight:normal;white-space:nowrap;">538868.6</div><div style="position:absolute;right:396.80px;top:366px;font-size:27.20px;line-height:31px;height:31px;color:#000;font-weight:normal;white-space:nowrap;">50.37693</div><div style="position:absolute;right:267.80px;top:366px;font-size:27.20px;line-height:31px;height:31px;color:#000;font-weight:normal;white-space:nowrap;">10696.73</div><div style="position:absolute;right:654.80px;top:406px;font-size:27.20px;line-height:31px;height:31px;color:#000;font-weight:normal;white-space:nowrap;">1953</div><div style="position:absolute;right:525.80px;top:406px;font-size:27.20px;line-height:31px;height:31px;color:#000;font-weight:normal;white-space:nowrap;">566292.7</div><div style="position:absolute;right:396.80px;top:406px;font-size:27.20px;line-height:31px;height:31px;color:#000;font-weight:normal;white-space:nowrap;">50.53975</div><div style="position:absolute;right:267.80px;top:406px;font-size:27.20px;line-height:31px;height:31px;color:#000;font-weight:normal;white-space:nowrap;">11204.9</div><div style="position:absolute;right:654.80px;top:446px;font-size:27.20px;line-height:31px;height:31px;color:#000;font-weight:normal;white-space:nowrap;">1954</div><div style="position:absolute;right:525.80px;top:446px;font-size:27.20px;line-height:31px;height:31px;color:#000;font-weight:normal;white-space:nowrap;">587976.6</div><div style="position:absolute;right:396.80px;top:446px;font-size:27.20px;line-height:31px;height:31px;color:#000;font-weight:normal;white-space:nowrap;">50.71157</div><div style="position:absolute;right:267.80px;top:446px;font-size:27.20px;line-height:31px;height:31px;color:#000;font-weight:normal;white-space:nowrap;">11594.52</div><div style="position:absolute;right:654.80px;top:486px;font-size:27.20px;line-height:31px;height:31px;color:#000;font-weight:normal;white-space:nowrap;">1955</div><div style="position:absolute;right:525.80px;top:486px;font-size:27.20px;line-height:31px;height:31px;color:#000;font-weight:normal;white-space:nowrap;">611781.8</div><div style="position:absolute;right:396.80px;top:486px;font-size:27.20px;line-height:31px;height:31px;color:#000;font-weight:normal;white-space:nowrap;">50.89238</div><div style="position:absolute;right:267.80px;top:486px;font-size:27.20px;line-height:31px;height:31px;color:#000;font-weight:normal;white-space:nowrap;">12021.09</div><div style="position:absolute;right:654.80px;top:526px;font-size:27.20px;line-height:31px;height:31px;color:#000;font-weight:normal;white-space:nowrap;">1956</div><div style="position:absolute;right:525.80px;top:526px;font-size:27.20px;line-height:31px;height:31px;color:#000;font-weight:normal;white-space:nowrap;">624797.2</div><div style="position:absolute;right:396.80px;top:526px;font-size:27.20px;line-height:31px;height:31px;color:#000;font-weight:normal;white-space:nowrap;">51.13013</div><div style="position:absolute;right:267.80px;top:526px;font-size:27.20px;line-height:31px;height:31px;color:#000;font-weight:normal;white-space:nowrap;">12219.75</div><div style="position:absolute;right:654.80px;top:566px;font-size:27.20px;line-height:31px;height:31px;color:#000;font-weight:normal;white-space:nowrap;">1957</div><div style="position:absolute;right:525.80px;top:566px;font-size:27.20px;line-height:31px;height:31px;color:#000;font-weight:normal;white-space:nowrap;">637094.3</div><div style="position:absolute;right:396.80px;top:566px;font-size:27.20px;line-height:31px;height:31px;color:#000;font-weight:normal;white-space:nowrap;">51.37588</div><div style="position:absolute;right:267.80px;top:566px;font-size:27.20px;line-height:31px;height:31px;color:#000;font-weight:normal;white-space:nowrap;">12400.65</div><div style="position:absolute;right:654.80px;top:606px;font-size:27.20px;line-height:31px;height:31px;color:#000;font-weight:normal;white-space:nowrap;">1958</div><div style="position:absolute;right:525.80px;top:606px;font-size:27.20px;line-height:31px;height:31px;color:#000;font-weight:normal;white-space:nowrap;">639945.4</div><div style="position:absolute;right:396.80px;top:606px;font-size:27.20px;line-height:31px;height:31px;color:#000;font-weight:normal;white-space:nowrap;">51.59764</div><div style="position:absolute;right:267.80px;top:606px;font-size:27.20px;line-height:31px;height:31px;color:#000;font-weight:normal;white-space:nowrap;">12402.61</div><div style="position:absolute;right:654.80px;top:646px;font-size:27.20px;line-height:31px;height:31px;color:#000;font-weight:normal;white-space:nowrap;">1959</div><div style="position:absolute;right:525.80px;top:646px;font-size:27.20px;line-height:31px;height:31px;color:#000;font-weight:normal;white-space:nowrap;">662977.8</div><div style="position:absolute;right:396.80px;top:646px;font-size:27.20px;line-height:31px;height:31px;color:#000;font-weight:normal;white-space:nowrap;">51.99132</div><div style="position:absolute;right:267.80px;top:646px;font-size:27.20px;line-height:31px;height:31px;color:#000;font-weight:normal;white-space:nowrap;">12756.47</div><div style="position:absolute;left:565px;top:321px;width:128px;height:39px;background:#fff;"></div><div style="position:absolute;left:436px;top:321px;width:128px;height:1px;background:#fff;"></div><div style="position:absolute;left:436px;top:359px;width:128px;height:1px;background:#fff;"></div><div style="position:absolute;left:436px;top:321px;width:1px;height:39px;background:#fff;"></div><div style="position:absolute;left:563px;top:321px;width:1px;height:39px;background:#fff;"></div><div style="position:absolute;left:434px;top:319px;width:132px;height:2px;background:#2e66c6;"></div><div style="position:absolute;left:434px;top:360px;width:132px;height:2px;background:#2e66c6;"></div><div style="position:absolute;left:434px;top:319px;width:2px;height:43px;background:#2e66c6;"></div><div style="position:absolute;left:564px;top:319px;width:2px;height:43px;background:#2e66c6;"></div><div style="position:absolute;left:436px;top:281px;width:128px;height:1px;background:#fff;"></div><div style="position:absolute;left:436px;top:319px;width:128px;height:1px;background:#fff;"></div><div style="position:absolute;left:436px;top:281px;width:1px;height:39px;background:#fff;"></div><div style="position:absolute;left:563px;top:281px;width:1px;height:39px;background:#fff;"></div><div style="position:absolute;left:434px;top:279px;width:132px;height:2px;background:#c42b36;"></div><div style="position:absolute;left:434px;top:320px;width:132px;height:2px;background:#c42b36;"></div><div style="position:absolute;left:434px;top:279px;width:2px;height:43px;background:#c42b36;"></div><div style="position:absolute;left:564px;top:279px;width:2px;height:43px;background:#c42b36;"></div><div style="position:absolute;left:432px;top:357px;width:7px;height:7px;background:#2e66c6;border:1px solid #fff"></div><div style="position:absolute;left:561px;top:357px;width:7px;height:7px;background:#2e66c6;border:1px solid #fff"></div><div style="position:absolute;left:563px;top:319px;width:131px;height:2px;background:#217346;"></div><div style="position:absolute;left:563px;top:321px;width:2px;height:39px;background:#217346;"></div><div style="position:absolute;left:563px;top:360px;width:127px;height:2px;background:#217346;"></div><div style="position:absolute;left:432px;top:277px;width:7px;height:7px;background:#c42b36;border:1px solid #fff"></div><div style="position:absolute;left:561px;top:277px;width:7px;height:7px;background:#c42b36;border:1px solid #fff"></div><div style="position:absolute;left:432px;top:317px;width:7px;height:7px;background:#c42b36;border:1px solid #fff"></div><div style="position:absolute;left:561px;top:317px;width:7px;height:7px;background:#c42b36;border:1px solid #fff"></div><div style="position:absolute;left:690px;top:359px;width:7px;height:5px;background:#217346;border:1px solid #fff;border-bottom:0"></div><div style="position:absolute;left:568.84px;top:326px;font-size:27.54px;line-height:31px;height:31px;color:#000;font-weight:normal;white-space:nowrap;transform:scaleX(0.9851);transform-origin:left 0;">=<span style="color:#3a6fc9">D3</span>/<span style="color:#c8202f">D2</span>-1</div><div style="position:absolute;left:686px;top:322px;width:1px;height:37px;background:#000;"></div>
</body></html>
